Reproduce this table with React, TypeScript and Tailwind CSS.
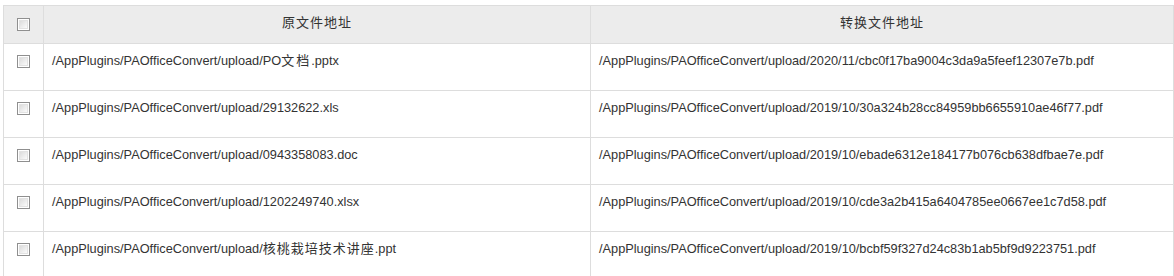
import React from "react";

const rows: [React.ReactNode, string][] = [
  [<>/AppPlugins/PAOfficeConvert/upload/PO<span className="tracking-[2px] text-[13px]">文档</span>.pptx</>, "/AppPlugins/PAOfficeConvert/upload/2020/11/cbc0f17ba9004c3da9a5feef12307e7b.pdf"],
  ["/AppPlugins/PAOfficeConvert/upload/29132622.xls", "/AppPlugins/PAOfficeConvert/upload/2019/10/30a324b28cc84959bb6655910ae46f77.pdf"],
  ["/AppPlugins/PAOfficeConvert/upload/0943358083.doc", "/AppPlugins/PAOfficeConvert/upload/2019/10/ebade6312e184177b076cb638dfbae7e.pdf"],
  ["/AppPlugins/PAOfficeConvert/upload/1202249740.xlsx", "/AppPlugins/PAOfficeConvert/upload/2019/10/cde3a2b415a6404785ee0667ee1c7d58.pdf"],
  [<>/AppPlugins/PAOfficeConvert/upload/<span className="tracking-[1px] text-[13px]">核桃栽培技术讲座</span>.ppt</>, "/AppPlugins/PAOfficeConvert/upload/2019/10/bcbf59f327d24c83b1ab5bf9d9223751.pdf"],
];

function Box() {
  return (
    <div className="w-[13px] h-[13px] border border-[#8f8f8f] bg-white p-px">
      <div className="w-full h-full border border-[#e2e2e2] bg-gradient-to-br from-[#dcdcdc] to-[#fbfbfb]" />
    </div>
  );
}

export default function App() {
  return (
    <div className="bg-white w-[1174px] h-[276px] overflow-hidden pt-[5px] pl-[3px]" style={{ fontFamily: '"Liberation Sans", Arial, "Noto Sans CJK SC", sans-serif' }}>
      <div className="w-[1171px] border-t border-l border-r border-[#dddddd] text-[12.75px] text-[#333333]">
        <div className="grid grid-cols-[39px_547px_583px] bg-[#ececec] border-b border-[#dddddd] h-[38px] text-[13px]">
          <div className="flex items-center justify-center"><Box /></div>
          <div className="border-l border-[#dddddd] flex items-center justify-center tracking-[1px] pb-[3px]">原文件地址</div>
          <div className="border-l border-[#dddddd] flex items-center justify-center tracking-[1px] pb-[3px]">转换文件地址</div>
        </div>
        {rows.map((r, i) => (
          <div key={i} className="grid grid-cols-[39px_547px_583px] border-b border-[#dddddd] h-[47px]">
            <div className="flex justify-center pt-[11px]"><Box /></div>
            <div className="border-l border-[#dddddd] pl-[8px] pt-[8px] leading-[18px]">{r[0]}</div>
            <div className="border-l border-[#dddddd] pl-[8px] pt-[8px] leading-[18px]">{r[1]}</div>
          </div>
        ))}
      </div>
    </div>
  );
}
